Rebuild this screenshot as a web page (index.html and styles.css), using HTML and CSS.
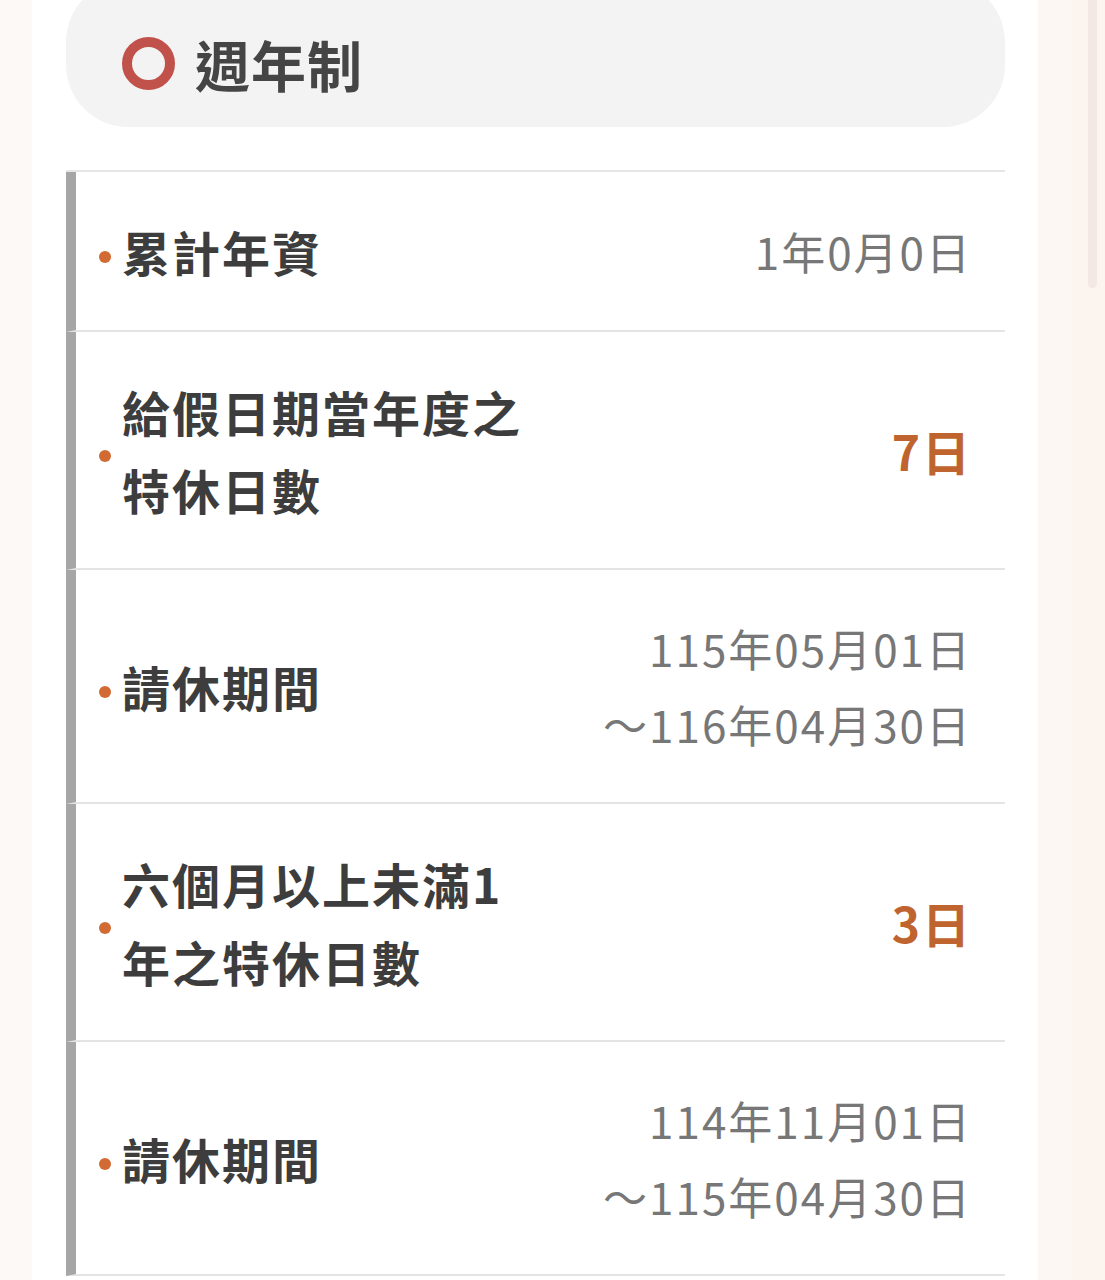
FILE: index.html
```html
<!DOCTYPE html>
<html lang="zh-Hant">
<head>
    <meta charset="UTF-8">
    <meta name="viewport" content="width=device-width, initial-scale=1.0">
    <title>特休計算 - 週年制</title>
    <link rel="stylesheet" href="styles.css">
</head>
<body>
    <div class="layout">
        <div class="page">
            <div class="section-title">
                <svg class="ring" width="53" height="53" viewBox="0 0 53 53">
                    <circle cx="26.5" cy="26.5" r="21.5" fill="none" stroke="#c1514b" stroke-width="10"/>
                </svg>
                <h2>週年制</h2>
            </div>

            <div class="result-list">
                <div class="result-row">
                    <span class="dot"></span>
                    <div class="label">累計年資</div>
                    <div class="value">1年0月0日</div>
                </div>
                <div class="result-row">
                    <span class="dot"></span>
                    <div class="label">給假日期當年度之特休日數</div>
                    <div class="value highlight">7日</div>
                </div>
                <div class="result-row">
                    <span class="dot"></span>
                    <div class="label">請休期間</div>
                    <div class="value">115年05月01日<br>～116年04月30日</div>
                </div>
                <div class="result-row">
                    <span class="dot"></span>
                    <div class="label">六個月以上未滿1年之特休日數</div>
                    <div class="value highlight">3日</div>
                </div>
                <div class="result-row">
                    <span class="dot"></span>
                    <div class="label">請休期間</div>
                    <div class="value">114年11月01日<br>～115年04月30日</div>
                </div>
            </div>
        </div>
        <div class="gutter"></div>
        <div class="scroll-track">
            <div class="scroll-thumb"></div>
        </div>
    </div>
</body>
</html>
```

FILE: styles.css
```css
body {
    margin: 0;
    background-color: #fdf9f6;
    font-family: "Noto Sans CJK TC", "Noto Sans", sans-serif;
    overflow: hidden;
}
.layout {
    display: flex;
    height: 1280px;
    overflow: hidden;
}
.page {
    flex: 0 0 1006px;
    margin-left: 32px;
    background: white;
    padding: 0 33px 0 34px;
    box-sizing: border-box;
}
.gutter {
    flex: 0 0 34px;
    background: #fcf7f3;
}
.scroll-track {
    flex: 1;
    background: #fcf4ef;
}
.scroll-thumb {
    width: 9px;
    height: 288px;
    margin-left: 16px;
    background: #f3e8e3;
    border-radius: 0 0 5px 5px;
}
.section-title {
    display: flex;
    align-items: center;
    gap: 20px;
    height: 147px;
    margin-top: -20px;
    padding: 20px 0 0 56px;
    box-sizing: border-box;
    background: #f3f3f3;
    border-radius: 62px;
}
.section-title h2 {
    margin: 0;
    font-size: 55px;
    font-weight: 700;
    color: #454545;
    line-height: 1;
    letter-spacing: 1px;
}
.ring {
    display: block;
}
.result-list {
    margin-top: 43px;
    border-top: 2px solid #e6e6e6;
}
.result-row {
    display: flex;
    align-items: center;
    padding: 40px 33px 40px 23px;
    border-left: 10px solid #a6a6a6;
    border-bottom: 2px solid #e4e4e4;
}
.dot {
    flex: 0 0 12px;
    height: 12px;
    border-radius: 50%;
    background: #d26a33;
    margin: 12px 11px 0 0;
}
.label {
    width: 412px;
    font-size: 48px;
    font-weight: 700;
    line-height: 78px;
    letter-spacing: 2px;
    color: #3d3d3d;
}
.value {
    flex: 1;
    text-align: right;
    font-size: 44px;
    line-height: 76px;
    letter-spacing: 2px;
    color: #777;
}
.value.highlight {
    font-size: 48px;
    font-weight: 700;
    color: #c0642f;
}
```
